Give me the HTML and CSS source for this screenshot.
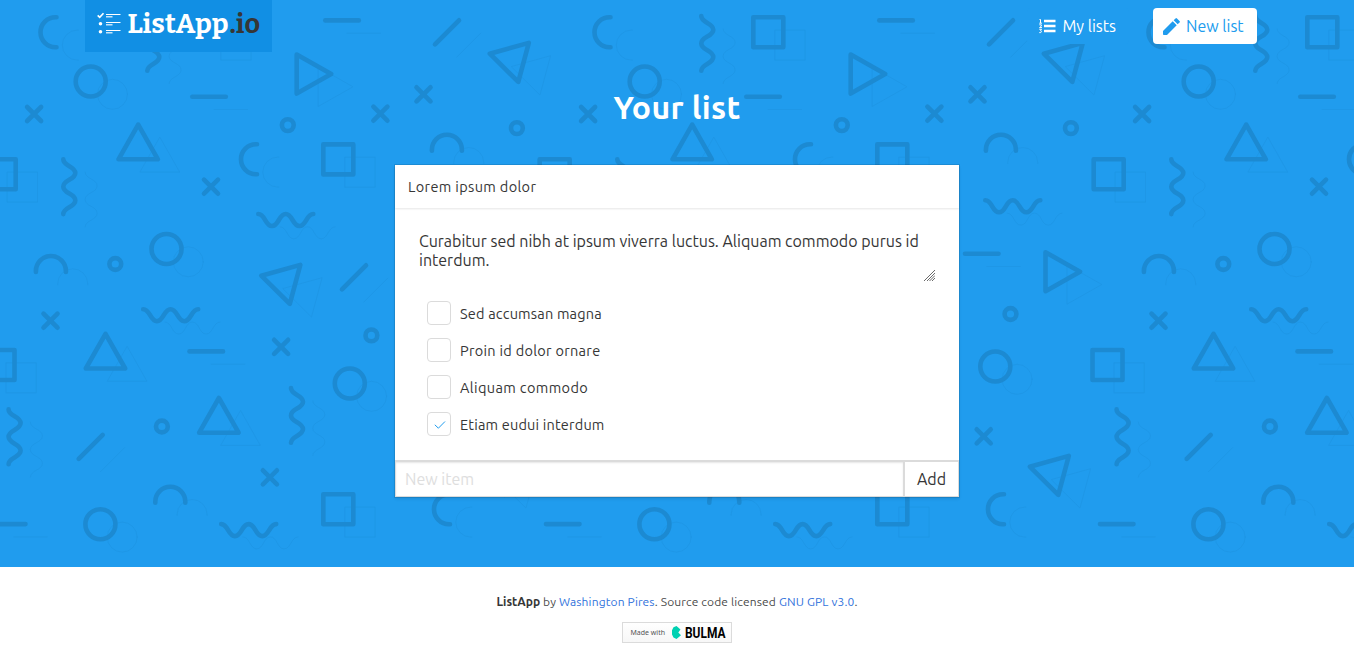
FILE: index.html
```html
<!DOCTYPE html>
<html lang="en">
<head>
<meta charset="utf-8">
<title>ListApp.io</title>
<link rel="stylesheet" href="styles.css">
</head>
<body>
<section class="hero">
  <svg class="pattern" width="1354" height="567" viewBox="0 0 1354 567" aria-hidden="true">
    <defs>
      <circle id="circle" r="15"/>
      <circle id="ring" r="5.9"/>
      <rect id="square" width="30" height="30"/>
      <path id="moon" d="M16 0h-1a15 15 0 0 0 0 30h1"/>
      <path id="arch" d="M0 16v-1a15 15 0 0 1 30 0v1"/>
      <path id="cross" d="M-7-7 7 7M7-7-7 7"/>
      <path id="dash" d="M0 0h33.5"/>
      <path id="slash" d="M0 24 24 0"/>
      <path id="wave-v" d="M0 0C0 7 12 6.8 12 13.7S0 20.5 0 27.4s12 6.8 12 13.7S0 48 0 54.8"/>
      <path id="wave-h" d="M0 0C7 0 6.8 12 13.7 12S20.5 0 27.4 0s6.8 12 13.7 12S48 0 55 0"/>
      <path id="tri-up" d="M19.7 0 39.4 34.7H0z"/>
      <path id="tri-right" d="M0 0 34.5 19.5 0 39z"/>
      <path id="tri-tilt" d="M0 10.8 39 0 28.5 39z"/>
      <g id="large">
        <use href="#moon" x="40.5" y="17.3"/><use href="#circle" x="90.7" y="81.5"/>
        <use href="#wave-v" x="147.3" y="16"/><use href="#square" x="199.3" y="17.3"/>
        <use href="#dash" x="192.3" y="96.7"/><use href="#tri-right" x="296.7" y="54.5"/>
        <use href="#dash" x="325.3" y="20.4"/><use href="#slash" x="435" y="20.3"/>
        <use href="#tri-tilt" x="489.8" y="42.9"/><use href="#arch" x="431.9" y="134.7"/>
        <use href="#tri-up" x="118.5" y="124.6"/><use href="#moon" x="241" y="144.3"/>
        <use href="#square" x="323.3" y="144.4"/><use href="#wave-v" x="63.3" y="159.3"/>
        <use href="#square" x="-14.3" y="159.3"/><use href="#wave-h" x="258.3" y="214"/>
        <use href="#wave-h" x="431.3" y="200.3"/><use href="#circle" x="166.5" y="249"/>
        <use href="#arch" x="35.9" y="256"/><use href="#tri-tilt" x="261.3" y="264.9"/>
        <use href="#dash" x="411" y="253.7"/><use href="#tri-right" x="491.5" y="252.2"/>
        <use href="#slash" x="342" y="265.3"/><use href="#wave-h" x="143.2" y="309.2"/>
        <use href="#tri-up" x="85.8" y="333.8"/><use href="#dash" x="189.5" y="351.4"/>
        <use href="#circle" x="349.8" y="383.5"/><use href="#square" x="-15.5" y="350"/>
        <use href="#circle" x="441.3" y="366.5"/><use href="#wave-v" x="8.6" y="409.4"/>
        <use href="#slash" x="78.7" y="434.9"/><use href="#tri-up" x="199.2" y="398"/>
        <use href="#wave-v" x="291" y="388"/><use href="#tri-tilt" x="475.8" y="455.9"/>
        <use href="#arch" x="155.3" y="486.7"/><use href="#circle" x="100.4" y="524.3"/>
        <use href="#dash" x="-8" y="524.1"/><use href="#wave-h" x="221.2" y="524.1"/>
        <use href="#square" x="323.3" y="494.3"/><use href="#moon" x="434" y="494.3"/>
      </g>
      <g id="small">
        <use href="#cross" x="34.1" y="114"/><use href="#cross" x="380.4" y="113.7"/>
        <use href="#cross" x="423.5" y="94.3"/><use href="#cross" x="211" y="186.7"/>
        <use href="#cross" x="50.5" y="320.7"/><use href="#cross" x="281.1" y="346.8"/>
        <use href="#cross" x="269.9" y="477.3"/><use href="#cross" x="429.7" y="436.3"/>
        <use href="#ring" x="287.8" y="125.1"/><use href="#ring" x="516.9" y="128.1"/>
        <use href="#ring" x="115.3" y="264"/><use href="#ring" x="456.5" y="314"/>
        <use href="#ring" x="371.4" y="335.4"/><use href="#ring" x="161.9" y="426.5"/>
      </g>
      <g id="tile">
        <use href="#large" class="echo" x="21.8" y="12.8"/>
        <use href="#large"/><use href="#small"/>
      </g>
    </defs>
    <use href="#tile" x="-554"/><use href="#tile"/><use href="#tile" x="554"/><use href="#tile" x="1108"/>
  </svg>

  <nav class="navbar">
    <a class="brand">
      <svg width="187" height="52" viewBox="0 0 187 52">
        <g fill="none" stroke="#fff">
          <path stroke-width="1.6" d="m12.7 15.4 2 2 3.8-4.2"/>
          <path stroke-width="1.2" d="M21 14.500h14.500M21 22.500h14.500M21 30.500h14.500"/>
          <path stroke-width="1.500" stroke="#c4e3f9" d="M21 16.800h6.500M21 24.800h6.500M21 32.800h6.500"/>
        </g>
        <g fill="#fff"><circle cx="15.500" cy="23.700" r="1.800"/><circle cx="15.500" cy="31.800" r="1.800"/></g>
        <text class="logo" x="42.500" y="33" textLength="101" lengthAdjust="spacingAndGlyphs">ListApp</text>
        <text class="logo logo-dark" x="144.500" y="33" textLength="30.500" lengthAdjust="spacingAndGlyphs">.io</text>
      </svg>
    </a>
    <div class="nav-end">
      <a class="button">
        <svg class="icon" width="17" height="16" viewBox="0 0 17 16">
          <path fill="none" stroke="#fff" stroke-width="2.300" d="M5 3h11.500M5 8h11.500M5 13h11.500"/>
          <path fill="none" stroke="#fff" stroke-width="1" d="M.500 1.500h1v3.500M.300 5.200H3M.300 6.800h2v1.400L.500 9.600H3M.300 11.300h2.200l-1 1.600c1.700 0 1.300 2.200-1.200 1.700"/>
        </svg>
        <span>My lists</span>
      </a>
      <a class="button button-white">
        <svg class="icon" width="17" height="17" viewBox="0 0 17 17">
          <path fill="#209cee" d="M0 13 9.700 3.300l4 4L4 17H.8a.8.800 0 0 1-.8-.8zM10.700 2.300 12.500.5a1 1 0 0 1 1.500 0l2.500 2.500a1 1 0 0 1 0 1.500l-1.800 1.800z"/>
        </svg>
        <span>New list</span>
      </a>
    </div>
  </nav>

  <h1 class="title">Your list</h1>

  <main class="card">
    <header class="card-header">Lorem ipsum dolor</header>
    <div class="card-content">
      <div class="field">
        <textarea class="description" spellcheck="false">Curabitur sed nibh at ipsum viverra luctus. Aliquam commodo purus id interdum.</textarea>
        <svg class="grip" width="11" height="11" viewBox="0 0 11 11"><path fill="none" stroke="#6b6b6b" stroke-width="1" d="M0 11 11 0M3 11l8-8M5.500 11 11 5.500M8 11l3-3"/></svg>
      </div>
      <ul class="items">
        <li class="item"><span class="check"></span><span class="text-snug">Sed accumsan magna</span></li>
        <li class="item"><span class="check"></span><span class="text-loose">Proin id dolor ornare</span></li>
        <li class="item"><span class="check"></span><span class="text-wide">Aliquam commodo</span></li>
        <li class="item"><span class="check"><svg class="tick" width="12" height="10" viewBox="0 0 12 10"><path fill="none" stroke="#209cee" stroke-width="1" d="m.800 4.800 3.600 3.400L11 1.500"/></svg></span><span class="text-snug">Etiam eudui interdum</span></li>
      </ul>
    </div>
    <div class="add-row">
      <input class="new-item" placeholder="New item">
      <button class="add">Add</button>
    </div>
  </main>
</section>

<footer class="footer">
  <p class="credits"><strong>ListApp</strong> by <a>Washington Pires</a>. Source code licensed <a>GNU GPL v3.0</a>.</p>
  <svg class="badge" width="110" height="21" viewBox="0 0 110 21">
    <defs><linearGradient id="shade" x2="0" y2="1"><stop stop-color="#fff"/><stop offset="1" stop-color="#f7f7f7"/></linearGradient></defs>
    <rect x=".500" y=".500" width="109" height="20" fill="url(#shade)" stroke="#dbdbdb"/>
    <text class="made" x="8.500" y="13" textLength="34.500" lengthAdjust="spacingAndGlyphs">Made with</text>
    <path fill="#00d1b2" d="m50 8.200 1.500-3L54.500 4l4 3.500-2.200 3 2.700 2.800-4.500 3.700-3-1.500-1.500-3z"/>
    <text class="bulma" x="63" y="15.700" textLength="40.500" lengthAdjust="spacingAndGlyphs">BULMA</text>
  </svg>
</footer>
</body>
</html>
```
FILE: styles.css
```css
* { box-sizing: border-box; }

body {
  margin: 0;
  background: #fff;
  color: #363636;
  font-family: Ubuntu, "Noto Sans", "Open Sans", sans-serif;
  font-size: 16px;
  overflow: hidden;
}

.hero {
  position: relative;
  height: 567px;
  background: #209cee;
  display: flex;
  flex-direction: column;
  align-items: center;
}

.pattern {
  position: absolute;
  inset: 0;
  fill: none;
  stroke: #1c8ad2;
  stroke-width: 4.6;
  stroke-linecap: round;
  stroke-linejoin: round;
}
.echo { stroke: #1e95e5; stroke-width: .8; }

.navbar {
  position: relative;
  width: 1184px;
  height: 52px;
  display: flex;
  justify-content: space-between;
}
.brand { width: 187px; height: 52px; background: #118fe4; }
.brand svg { display: block; }
.logo { font: bold 27px Bitter, "DejaVu Serif", serif; fill: #fff; }
.logo-dark { fill: #363636; }

.nav-end { display: flex; gap: 24px; padding: 8px 12px 0 0; }
.button {
  display: flex;
  align-items: center;
  height: 36px;
  padding: 0 13px 0 12px;
  border-radius: 4px;
  background: #209cee;
  color: #fff;
  white-space: nowrap;
}
.button-white { width: 104px; padding: 0 10px; background: #fff; color: #209cee; }
.icon { margin-right: 6px; }

.title {
  position: relative;
  margin: 35px 0 0;
  height: 40px;
  line-height: 40px;
  font-size: 32px;
  font-weight: 700;
  color: #fff;
  letter-spacing: .3px;
}

.card {
  position: relative;
  width: 564px;
  height: 332px;
  margin-top: 38px;
  background: #fff;
  box-shadow: 0 2px 3px rgba(10, 10, 10, .1), 0 0 0 1px rgba(10, 10, 10, .1);
}
.card-header {
  height: 43px;
  padding-left: 13px;
  line-height: 43px;
  font-size: 14.5px;
  letter-spacing: .35px;
  box-shadow: 0 1px 2px rgba(10, 10, 10, .1);
}
.card-content { height: 252px; padding: 22px 24px 0; }
.field { position: relative; }
.description {
  display: block;
  width: 516px;
  height: 53px;
  padding: 2px 0 0;
  border: 0;
  outline: 0;
  overflow: hidden;
  resize: none;
  background: transparent;
  color: #363636;
  font: 16px/19px Ubuntu, "Noto Sans", sans-serif;
}
.grip { position: absolute; right: 0; bottom: 2px; }
.items { margin: 18px 0 0; padding: 0 0 0 8px; list-style: none; display: grid; gap: 13px; }
.item { display: flex; align-items: center; gap: 9px; height: 24px; font-size: 14.5px; }
.text-snug { letter-spacing: .19px; }
.text-loose { letter-spacing: .29px; }
.text-wide { letter-spacing: .38px; }
.check {
  width: 24px;
  height: 24px;
  border: 1px solid #dbdbdb;
  border-radius: 4px;
  display: flex;
  align-items: center;
  justify-content: center;
}
.tick { margin: 1px 0 0 2px; }

.add-row { display: flex; height: 37px; border-top: 1px solid #dbdbdb; }
.new-item, .add {
  height: 36px;
  border: 1px solid #dbdbdb;
  border-radius: 0;
  background: #fff;
  color: #363636;
  font: 16px Ubuntu, "Noto Sans", sans-serif;
}
.new-item { width: 509px; padding: 0 9px; box-shadow: inset 0 1px 2px rgba(10, 10, 10, .1); }
.new-item::placeholder { color: #dedede; opacity: 1; }
.add { width: 55px; padding: 0; }

.footer { display: flex; flex-direction: column; align-items: center; padding-top: 26px; }
.credits { margin: 0; height: 18px; line-height: 18px; font-size: 12px; letter-spacing: .14px; color: #4a4a4a; }
.credits strong { color: #363636; letter-spacing: 0; }
.credits a { color: #3273dc; }
.badge { margin-top: 11px; }
.made { font: 7px "Noto Sans", sans-serif; fill: #555; }
.bulma { font: bold 14px Roboto, sans-serif; fill: #000; }
```
